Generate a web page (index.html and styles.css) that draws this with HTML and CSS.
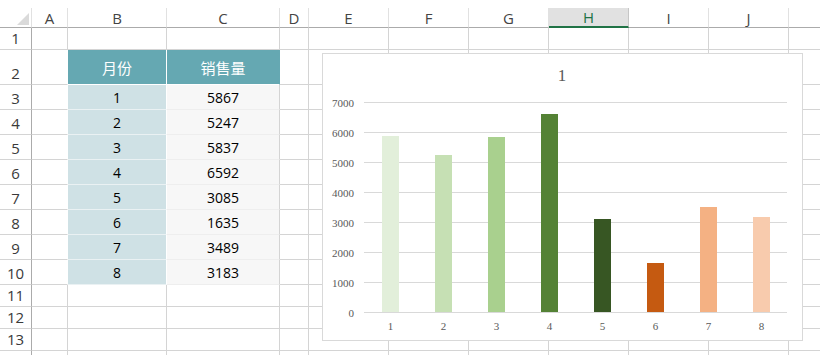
FILE: index.html
```html
<!DOCTYPE html>
<html lang="zh-CN">
<head>
    <meta charset="UTF-8">
    <title>销售量</title>
    <link rel="stylesheet" href="styles.css">
</head>
<body>

<div class="sheet" id="sheet">
    <!-- cells are inserted here -->
    <div class="chart" id="chart"></div>
</div>

<script>
    // Monthly sales
    const sales = [5867, 5247, 5837, 6592, 3085, 1635, 3489, 3183];
    const barColors = ["#e2efda", "#c6e0b4", "#a9d08e", "#548235", "#375623", "#c55a11", "#f4b183", "#f8cbad"];
    const letters = ["A", "B", "C", "D", "E", "F", "G", "H", "I", "J", ""];

    const sheet = document.getElementById("sheet");
    const chart = document.getElementById("chart");

    function addCell(cls, text) {
        const div = document.createElement("div");
        div.className = "cell " + cls;
        div.textContent = text || "";
        sheet.insertBefore(div, chart);
    }

    // Column header row
    addCell("corner");
    letters.forEach(l => addCell("col-head" + (l === "H" ? " active" : ""), l));

    // Rows 1..14
    for (let r = 1; r <= 14; r++) {
        addCell("row-head", r <= 13 ? r : "");
        for (let c = 0; c < letters.length; c++) {
            let cls = "";
            let text = "";
            const inTable = r >= 2 && r <= 10;
            if (c === 0 && inTable) cls = "beside";
            if (r === 2 && c === 1) { cls = "th"; text = "月份"; }
            if (r === 2 && c === 2) { cls = "th last"; text = "销售量"; }
            if (r >= 3 && r <= 10 && c === 1) { cls = "month"; text = r - 2; }
            if (r >= 3 && r <= 10 && c === 2) { cls = "amount"; text = sales[r - 3]; }
            addCell(cls, text);
        }
    }

    // Column chart
    function renderChart() {
        const base = 258;
        let svg = '<svg width="479" height="286" viewBox="0 0 479 286">';
        svg += '<text class="title" x="239" y="27" text-anchor="middle">1</text>';
        for (let i = 0; i <= 7; i++) {
            const y = 48 + i * 30;
            svg += `<line x1="41" x2="464" y1="${y + 0.5}" y2="${y + 0.5}" stroke="#d9d9d9"/>`;
            svg += `<text class="axis" x="31" y="${y + 5}" text-anchor="end">${(7 - i) * 1000}</text>`;
        }
        sales.forEach((v, i) => {
            const h = Math.round(v * 0.03);
            const x = 59 + i * 53;
            svg += `<rect x="${x}" y="${base - h}" width="17" height="${h}" fill="${barColors[i]}"/>`;
            svg += `<text class="axis" x="${x + 8.5}" y="276" text-anchor="middle">${i + 1}</text>`;
        });
        svg += '</svg>';
        chart.innerHTML = svg;
    }

    renderChart();
</script>

</body>
</html>
```

FILE: styles.css
```css
html, body {
    margin: 0;
    height: 355px;
    overflow: hidden;
    background-color: #fff;
}

body {
    padding-top: 8px;
    box-sizing: border-box;
    font-family: "Open Sans", "Noto Sans CJK SC", sans-serif;
}

.sheet {
    position: relative;
    height: 347px;
    overflow: hidden;
    display: grid;
    grid-template-columns: 32px 36px 99px 113px 29px repeat(6, 80px) 40px;
    grid-template-rows: 20px 22px 35px repeat(8, 25px) repeat(4, 22px);
    grid-auto-rows: 22px;
}

.cell {
    box-sizing: border-box;
    border-right: 1px solid #d4d4d4;
    border-bottom: 1px solid #d4d4d4;
    display: flex;
    align-items: center;
    justify-content: center;
    font-size: 14px;
    color: #000;
    overflow: hidden;
    white-space: nowrap;
}

.corner {
    position: relative;
    border-right-color: #e1e1e1;
    border-bottom-color: #ababab;
}

.corner::after {
    content: "";
    position: absolute;
    right: 2px;
    bottom: 2px;
    width: 12px;
    height: 12px;
    background-color: #dadada;
    clip-path: polygon(100% 0, 100% 100%, 0 100%);
}

.col-head {
    border-right-color: #e1e1e1;
    border-bottom-color: #ababab;
    font-size: 15px;
    color: #444;
}

.col-head.active {
    background-color: #e1e1e1;
    border-right-color: #c6c6c6;
    border-bottom: 2px solid #217346;
    color: #217346;
}

.row-head {
    border-right-color: #ababab;
    align-items: flex-end;
    padding-bottom: 2px;
    font-size: 15px;
    line-height: 17px;
    color: #3a3a3a;
}

.beside {
    border-right-color: #fff;
}

.th {
    background-color: #65a8b2;
    border-right-color: #fff;
    border-bottom-color: #fff;
    color: #fff;
    font-family: "Noto Sans CJK SC", sans-serif;
    font-size: 15px;
}

.th.last {
    border-right-color: #65a8b2;
}

.month {
    background-color: #cfe1e5;
    border-right-color: #fff;
    border-bottom-color: #eaf1f3;
}

.amount {
    background-color: #f7f7f7;
    border-bottom-color: #eeeeee;
}

.chart {
    position: absolute;
    left: 322px;
    top: 45px;
    width: 481px;
    height: 288px;
    box-sizing: border-box;
    border: 1px solid #d9d9d9;
    background-color: #fff;
}

.chart svg {
    display: block;
}

.title {
    font-family: "Liberation Serif", serif;
    font-size: 17px;
    fill: #595959;
}

.axis {
    font-family: "Liberation Serif", serif;
    font-size: 11px;
    fill: #595959;
}
```
